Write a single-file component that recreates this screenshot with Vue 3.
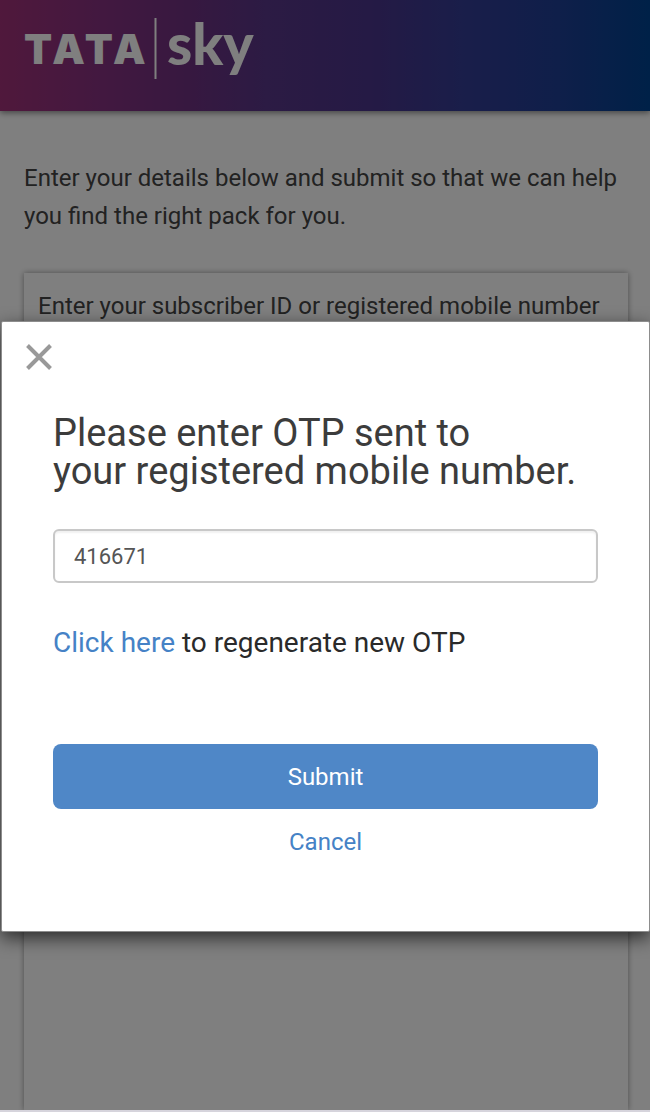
<script setup>
import { ref } from 'vue'

const open = ref(true)
const otp = ref('416671')
const subscriber = ref('')

function close() {
  open.value = false
}
</script>

<template>
  <div class="page">
    <header class="header">
      <svg class="logo" viewBox="0 0 232 64" role="img" aria-label="TATA sky">
        <text class="logo-tata" x="0" y="47">TATA</text>
        <path class="logo-rule" d="M131.5 1V62" />
        <text class="logo-sky" x="143" y="48">sky</text>
      </svg>
    </header>

    <main class="content">
      <p class="intro">Enter your details below and submit so that we can help you find the right pack for you.</p>
      <section class="card">
        <label for="subscriber">Enter your subscriber ID or registered mobile number</label>
        <input id="subscriber" v-model="subscriber" class="card-input" type="text" />
      </section>
    </main>

    <div v-if="open" class="backdrop">
      <form class="dialog" role="dialog" aria-labelledby="otp-title" @submit.prevent="close">
        <button class="close" type="button" aria-label="Close" @click="close">
          <svg viewBox="0 0 26 26" width="26" height="26"><path d="M1.5 1.5 24.5 24.5M24.5 1.5 1.5 24.5" /></svg>
        </button>
        <div class="dialog-body">
          <label id="otp-title" class="title" for="otp">Please enter OTP sent to<br />your registered mobile number.</label>
          <input id="otp" v-model="otp" class="otp" type="text" inputmode="numeric" />
          <p class="regenerate"><a href="#">Click here</a> to regenerate new OTP</p>
          <button class="submit" type="submit">Submit</button>
          <button class="cancel" type="button" @click="close">Cancel</button>
        </div>
      </form>
    </div>
  </div>
</template>

<style>
body {
  background: #fff;
}
</style>

<style scoped>
.page,
.page * {
  box-sizing: border-box;
}

.page {
  position: relative;
  display: flex;
  flex-direction: column;
  min-height: 100vh;
  overflow: hidden;
  border-bottom: 2px solid #d6d4dc;
  background: #fff;
  color: #444;
  font-family: Roboto, "Liberation Sans", sans-serif;
  font-size: 24px;
}

.header {
  height: 111px;
  padding: 17px 24px;
  background: linear-gradient(90deg, #a03078 0%, #863080 15%, #703080 28%, #583688 41%, #4a348a 57%, #343c94 71%, #1e3e94 86%, #004290 100%);
  box-shadow: 0 2px 6px rgba(0, 0, 0, 0.45);
}

.logo {
  display: block;
  width: 232px;
  height: 64px;
  overflow: visible;
  fill: #fff;
}

.logo-tata {
  font-family: Inter, "Liberation Sans", sans-serif;
  font-size: 41px;
  font-weight: 900;
  font-kerning: none;
}

.logo-sky {
  font-family: Lato, "Liberation Sans", sans-serif;
  font-size: 57px;
  font-weight: 900;
}

.logo-rule {
  stroke: #fff;
  stroke-width: 2;
}

.content {
  display: flex;
  flex: 1;
  flex-direction: column;
  padding: 48px 22px 0 24px;
}

.intro {
  margin: 0 0 38px;
  line-height: 38px;
}

.card {
  flex: 1;
  padding: 14px;
  background: #fff;
  box-shadow: 0 0 6px rgba(0, 0, 0, 0.4);
}

.card label {
  display: block;
  line-height: 38px;
}

.card-input {
  width: 100%;
  height: 54px;
  margin-top: 24px;
  border: 2px solid #ccc;
  border-radius: 6px;
}

.backdrop {
  position: absolute;
  inset: 0;
  padding: 321px 0 0 1px;
  background: rgba(0, 0, 0, 0.5);
}

.dialog {
  padding: 22px 24px 69px;
  border: 1px solid #8d8d8d;
  border-radius: 2px;
  background: #fff;
  box-shadow: 0 6px 18px rgba(0, 0, 0, 0.65);
}

.close {
  display: block;
  width: 26px;
  height: 26px;
  padding: 0;
  border: 0;
  background: none;
}

.close svg {
  display: block;
  fill: none;
  stroke: #999;
  stroke-width: 4;
}

.dialog-body {
  display: flex;
  flex-direction: column;
  padding: 44px 27px 0;
}

.title {
  color: #3c3c3c;
  font-size: 38px;
  line-height: 38px;
}

.otp {
  width: 100%;
  height: 54px;
  margin-top: 39px;
  padding: 0 19px;
  border: 2px solid #c8c8c8;
  border-radius: 6px;
  background: #fff;
  box-shadow: inset 0 2px 2px rgba(0, 0, 0, 0.06);
  color: #555;
  font: 22px Roboto, "Liberation Sans", sans-serif;
}

.regenerate {
  margin: 40px 0 0;
  color: #2a2a2a;
  font-size: 28px;
  line-height: 40px;
}

.regenerate a {
  color: #4582c6;
  text-decoration: none;
}

.submit,
.cancel {
  border: 0;
  font: 24px Roboto, "Liberation Sans", sans-serif;
}

.submit {
  height: 65px;
  margin-top: 81px;
  border-radius: 8px;
  background: #4f87c7;
  color: #fff;
}

.cancel {
  align-self: center;
  height: 40px;
  margin-top: 13px;
  padding: 0 12px;
  background: none;
  color: #4582c6;
}
</style>
